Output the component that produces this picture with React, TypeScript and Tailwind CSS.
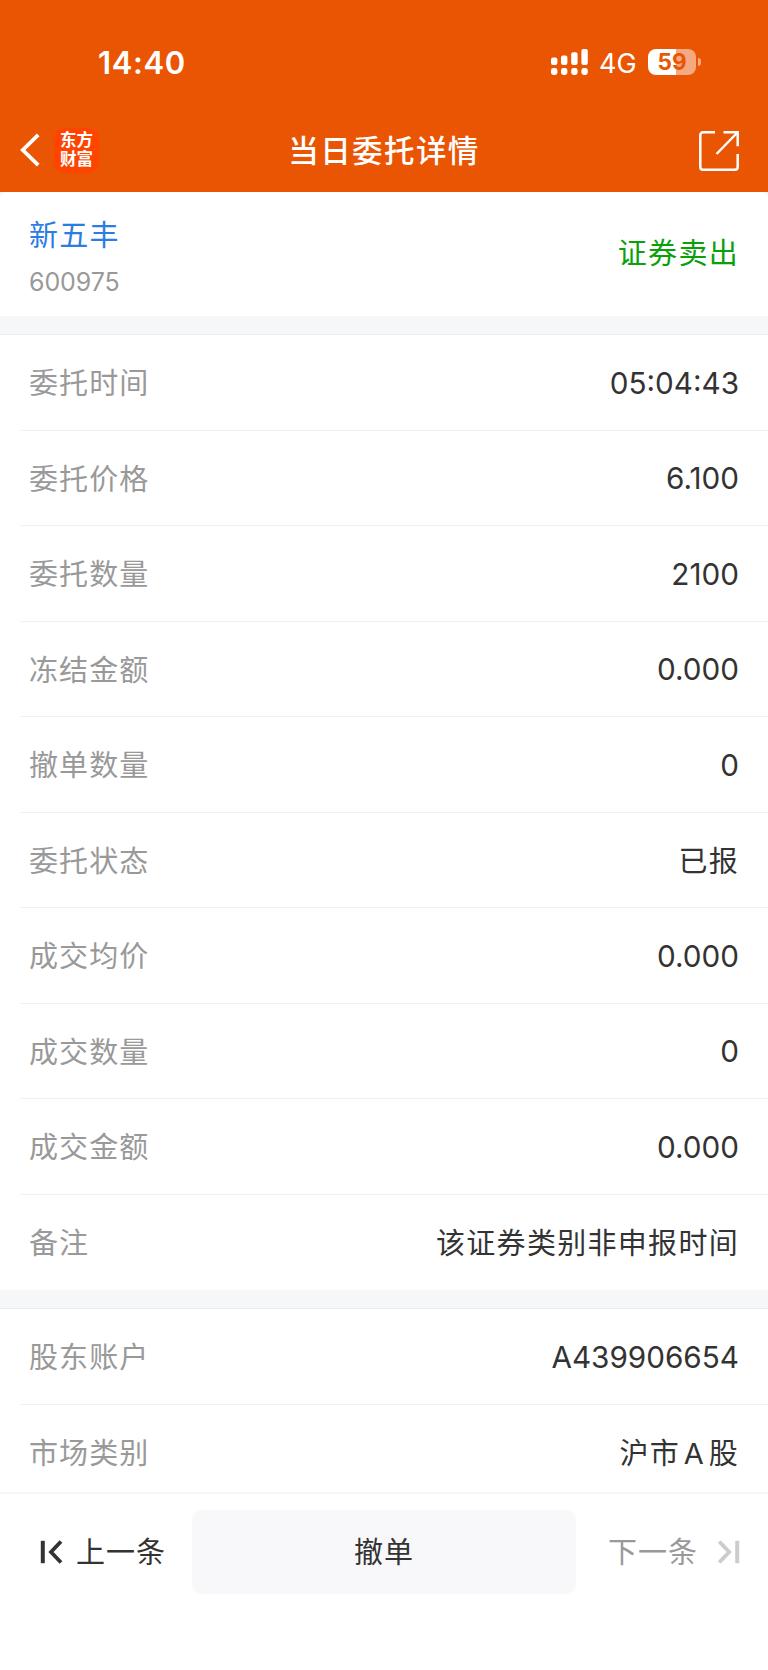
import { clsx } from 'clsx';

interface Field {
  label: string;
  value: string;
}

const ORDER_FIELDS: Field[] = [
  { label: '委托时间', value: '05:04:43' },
  { label: '委托价格', value: '6.100' },
  { label: '委托数量', value: '2100' },
  { label: '冻结金额', value: '0.000' },
  { label: '撤单数量', value: '0' },
  { label: '委托状态', value: '已报' },
  { label: '成交均价', value: '0.000' },
  { label: '成交数量', value: '0' },
  { label: '成交金额', value: '0.000' },
  { label: '备注', value: '该证券类别非申报时间' },
];

const ACCOUNT_FIELDS: Field[] = [
  { label: '股东账户', value: 'A439906654' },
  { label: '市场类别', value: '沪市 A 股' },
];

const isCjk = (text: string) => /[\u4e00-\u9fa5]/.test(text);

function StatusBar() {
  return (
    <div className="flex h-[108px] items-start pt-[43px] pl-[98px] pr-[67px] text-white">
      <span className="text-[31px] leading-[40px] font-semibold tracking-[0.6px]">14:40</span>
      <div className="ml-auto flex h-[38px] items-center">
        {/* 双卡信号 */}
        <svg width="38" height="26" viewBox="0 0 38 26" fill="currentColor">
          <rect x="0" y="8.5" width="6.4" height="7.5" rx="2" />
          <rect x="10" y="6.5" width="6.4" height="9.5" rx="2" />
          <rect x="20.2" y="3.2" width="6.4" height="12.8" rx="2" />
          <rect x="30.4" y="0" width="6.4" height="16" rx="2" />
          <rect x="0" y="19" width="6.4" height="7" rx="2.4" />
          <rect x="10" y="19" width="6.4" height="7" rx="2.4" />
          <rect x="20.2" y="19" width="6.4" height="7" rx="2.4" />
          <rect x="30.4" y="19" width="6.4" height="7" rx="2.4" />
        </svg>
        <span className="ml-[10px] w-[49px] pt-[3px] text-[27px] leading-[36px]">4G</span>
        {/* 电量 */}
        <div className="flex h-[26px] w-[48px] items-center justify-center rounded-[8px] bg-linear-to-r from-white from-58% to-white/50 to-58%">
          <span className="text-[22.5px] leading-[26px] font-bold text-[#ea5504]">59</span>
        </div>
        <span className="ml-[2px] h-[8px] w-[3px] rounded-r-full bg-white/50" />
      </div>
    </div>
  );
}

function TitleBar() {
  return (
    <div className="grid h-[84px] grid-cols-3 items-center pl-5 pr-7 text-white">
      <div className="flex items-center">
        <svg width="20" height="34" viewBox="0 0 20 34" fill="none" stroke="currentColor" strokeWidth="3.8">
          <path d="M18.2 1.8 2.8 17l15.4 15.2" />
        </svg>
        <div className="ml-[14px] flex h-[45px] w-[45px] flex-col items-center justify-center rounded-[10px] bg-[#ff4400] text-[16.5px] leading-[19px] font-bold">
          <span>东方</span>
          <span>财富</span>
        </div>
      </div>
      <h1 className="pt-[1px] pl-[8px] text-center text-[30.5px] font-medium tracking-[1.4px] whitespace-nowrap">当日委托详情</h1>
      <svg className="mt-[1px] ml-auto" width="42" height="42" viewBox="0 0 42 42" fill="none" stroke="currentColor" strokeWidth="2.5">
        <path d="M17 2.3H5A2.7 2.7 0 0 0 2.3 5v32A2.7 2.7 0 0 0 5 39.7h32a2.7 2.7 0 0 0 2.7-2.7V24" />
        <path d="M25.5 2.3h14.2v14" />
        <path d="M39 3 18.5 24" />
      </svg>
    </div>
  );
}

function FieldRow({ label, value, last }: Field & { last?: boolean }) {
  return (
    <div className="ml-5 h-[95.5px]">
      <div className={clsx('flex h-full items-center justify-between border-b pt-[3px] pl-[9px] pr-[29px]', last ? 'border-transparent' : 'border-[#f1f1f2]')}>
        <span className="text-[29px] tracking-[1.1px] text-[#999]">{label}</span>
        <span className={clsx('text-[#333]', isCjk(value) ? 'text-[29px] tracking-[1.3px] [word-spacing:-5.8px]' : '-mt-[1px] text-[29.7px]')}>{value}</span>
      </div>
    </div>
  );
}

export default function App() {
  return (
    <div className="flex h-[1670px] w-[768px] flex-col overflow-hidden bg-[#f6f7f9] font-['Inter','Noto_Sans_CJK_SC',sans-serif]">
      <header className="shrink-0 bg-[#ea5504]">
        <StatusBar />
        <TitleBar />
      </header>

      {/* 股票信息 */}
      <section className="flex h-[124px] shrink-0 items-center justify-between rounded-t-[6px] bg-white pl-[29px] pr-[29px]">
        <div className="pt-[10px]">
          <div className="text-[29px] leading-[44px] tracking-[1.3px] text-[#2b7de1]">新五丰</div>
          <div className="mt-[2px] text-[25px] leading-[44px] tracking-[-0.1px] text-[#999]">600975</div>
        </div>
        <div className="text-[29px] tracking-[1.3px] text-[#0aa00a]">证券卖出</div>
      </section>

      <section className="mt-[18px] shrink-0 border-t border-[#ececee] bg-white">
        {ORDER_FIELDS.map((f, i) => (
          <FieldRow key={f.label} {...f} last={i === ORDER_FIELDS.length - 1} />
        ))}
      </section>

      <section className="mt-[18px] h-[184px] shrink-0 overflow-hidden border-t border-[#ececee] bg-white">
        {ACCOUNT_FIELDS.map((f, i) => (
          <FieldRow key={f.label} {...f} last={i === ACCOUNT_FIELDS.length - 1} />
        ))}
      </section>

      {/* 底部操作栏 */}
      <footer className="flex flex-1 items-start border-t-2 border-[#f6f6f7] bg-white pt-[16px] text-[29px] tracking-[1px] text-[#333]">
        <button className="flex h-[84px] w-[192px] items-center pl-[40px]">
          <svg width="23" height="24" viewBox="0 0 23 24" fill="none" stroke="currentColor" strokeWidth="4">
            <path d="M2.8 .8v22.4" />
            <path d="M21 1.5 11 12l10 10.5" strokeWidth="3.8" />
          </svg>
          <span className="ml-[13px] pt-[2px]">上一条</span>
        </button>
        <button className="h-[84px] w-[384px] rounded-[10px] bg-[#f8f8fa] pt-[2px]">撤单</button>
        <button className="flex h-[84px] flex-1 items-center pl-[32px] text-[#999]">
          <span className="pt-[2px]">下一条</span>
          <svg className="ml-[20px] text-[#ccc]" width="23" height="24" viewBox="0 0 23 24" fill="none" stroke="currentColor" strokeWidth="4">
            <path d="M19.2 .8v22.4" />
            <path d="m1.2 1.5 10 10.5-10 10.5" strokeWidth="3.8" />
          </svg>
        </button>
      </footer>
    </div>
  );
}
